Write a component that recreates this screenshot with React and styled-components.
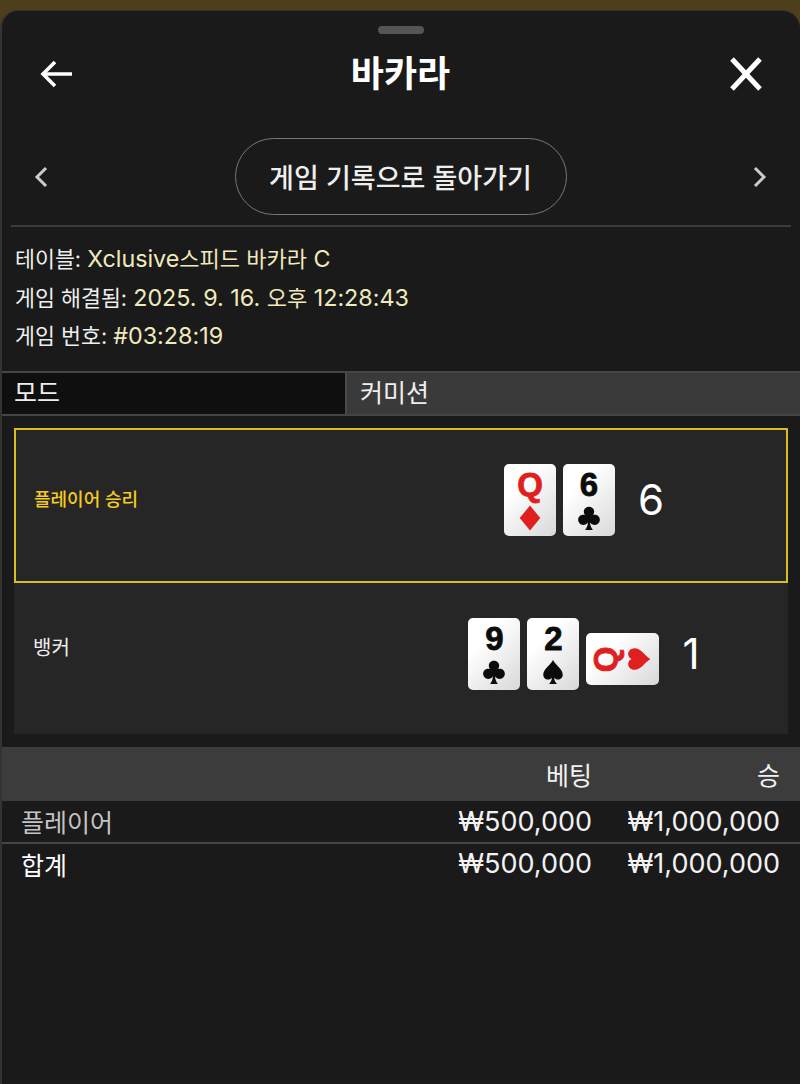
import React from 'react';
import styled, { createGlobalStyle } from 'styled-components';

const GlobalStyle = createGlobalStyle`
  html, body {
    margin: 0;
    height: 100%;
    background: #4d3f1b;
  }
  body {
    font-family: Inter, "Noto Sans CJK KR", "Noto Sans", sans-serif;
    color: #fff;
  }
  * { box-sizing: border-box; }
`;

const suitPaths = {
  diamond: 'M12 0.5 L21.5 12 L12 23.5 L2.5 12 Z',
  heart: 'M12 22.5 C9 17.5 2 14 2 7.8 C2 4.3 4.6 2 7.4 2 C9.4 2 11.2 3.2 12 5.2 C12.8 3.2 14.6 2 16.6 2 C19.4 2 22 4.3 22 7.8 C22 14 15 17.5 12 22.5 Z',
  spade: 'M12 1 C9.5 6 3 9.5 3 14.6 C3 17.4 5.1 19 7.3 19 C8.9 19 10.2 18.3 11 17 C10.9 19.4 10 21.4 8.4 23 L15.6 23 C14 21.4 13.1 19.4 13 17 C13.8 18.3 15.1 19 16.7 19 C18.9 19 21 17.4 21 14.6 C21 9.5 14.5 6 12 1 Z',
  club: 'M12 1.5 C9.2 1.5 7.2 3.6 7.2 6.2 C7.2 7.4 7.6 8.4 8.3 9.3 C7.8 9.1 7.2 9 6.6 9 C3.9 9 2 11.1 2 13.7 C2 16.3 4 18.4 6.6 18.4 C8.5 18.4 10 17.5 11 15.9 C10.9 18.8 10 21.2 8.4 23 L15.6 23 C14 21.2 13.1 18.8 13 15.9 C14 17.5 15.5 18.4 17.4 18.4 C20 18.4 22 16.3 22 13.7 C22 11.1 20.1 9 17.4 9 C16.8 9 16.2 9.1 15.7 9.3 C16.4 8.4 16.8 7.4 16.8 6.2 C16.8 3.6 14.8 1.5 12 1.5 Z',
};

const RED = '#e02020';
const BLACK = '#0c0c0c';

function Suit({ name, sideways }) {
  return (
    <SuitIcon viewBox="0 0 24 24" $sideways={sideways}>
      <path d={suitPaths[name]} fill={name === 'diamond' || name === 'heart' ? RED : BLACK} />
    </SuitIcon>
  );
}

function PlayingCard({ rank, suit, sideways }) {
  const isRed = suit === 'diamond' || suit === 'heart';
  return (
    <Card $sideways={sideways}>
      <Rank $red={isRed} $sideways={sideways}>{rank}</Rank>
      <Suit name={suit} sideways={sideways} />
    </Card>
  );
}

function App() {
  return (
    <>
      <GlobalStyle />
      <Sheet>
        <Handle />
        <Header>
          <IconButton>
            <svg width="32" height="28" viewBox="0 0 32 28" fill="none" stroke="#fff" strokeWidth="3.6">
              <path d="M32 14 H4" />
              <path d="M15 2 L3 14 L15 26" />
            </svg>
          </IconButton>
          <Title>바카라</Title>
          <IconButton>
            <svg width="34" height="34" viewBox="0 0 34 34" fill="none" stroke="#fff" strokeWidth="5">
              <path d="M3 2 L31 32" />
              <path d="M31 2 L3 32" />
            </svg>
          </IconButton>
        </Header>
        <NavRow>
          <Chevron>
            <svg width="14" height="22" viewBox="0 0 14 22" fill="none" stroke="#ccc" strokeWidth="3">
              <path d="M12 2 L3 11 L12 20" />
            </svg>
          </Chevron>
          <BackButton>게임 기록으로 돌아가기</BackButton>
          <Chevron>
            <svg width="14" height="22" viewBox="0 0 14 22" fill="none" stroke="#ccc" strokeWidth="3">
              <path d="M2 2 L11 11 L2 20" />
            </svg>
          </Chevron>
        </NavRow>
        <Info>
          <InfoLine>테이블: <InfoValue>Xclusive<Hangul>스피드 바카라</Hangul> C</InfoValue></InfoLine>
          <InfoLine>게임 해결됨: <InfoValue>2025. 9. 16. <Hangul>오후</Hangul> 12:28:43</InfoValue></InfoLine>
          <InfoLine>게임 번호: <InfoValue>#03:28:19</InfoValue></InfoLine>
        </Info>
        <Tabs>
          <Tab $active>모드</Tab>
          <Tab>커미션</Tab>
        </Tabs>
        <Results>
          <ResultPanel $winner>
            <ResultLabel $winner>플레이어 승리</ResultLabel>
            <Hand $winner>
              <PlayingCard rank="Q" suit="diamond" />
              <PlayingCard rank="6" suit="club" />
              <Score>6</Score>
            </Hand>
          </ResultPanel>
          <ResultPanel>
            <ResultLabel>뱅커</ResultLabel>
            <Hand>
              <PlayingCard rank="9" suit="club" />
              <PlayingCard rank="2" suit="spade" />
              <PlayingCard rank="Q" suit="heart" sideways />
              <Score>1</Score>
            </Hand>
          </ResultPanel>
        </Results>
        <TableHead>
          <span />
          <Amount>베팅</Amount>
          <Amount>승</Amount>
        </TableHead>
        <TableRow $divided>
          <RowLabel $muted>플레이어</RowLabel>
          <Amount $money>₩500,000</Amount>
          <Amount $money>₩1,000,000</Amount>
        </TableRow>
        <TableRow>
          <RowLabel>합계</RowLabel>
          <Amount $money>₩500,000</Amount>
          <Amount $money>₩1,000,000</Amount>
        </TableRow>
      </Sheet>
    </>
  );
}

export default App;

const Sheet = styled.div`
  margin-top: 10px;
  height: 1074px;
  overflow: hidden;
  background: #1a1a1a;
  border: 2px solid #333;
  border-width: 1px 0 0 2px;
  border-radius: 18px 18px 0 0;
`;

const Handle = styled.div`
  width: 46px;
  height: 8px;
  margin: 15px auto 0;
  border-radius: 4px;
  background: #555;
`;

const Header = styled.div`
  height: 80px;
  padding: 0 37px 0 38px;
  display: flex;
  align-items: center;
  justify-content: space-between;
`;

const IconButton = styled.div`
  display: flex;
  align-items: center;
  justify-content: center;
`;

const Title = styled.div`
  font-size: 36px;
  font-weight: 700;
  line-height: 1;
`;

const NavRow = styled.div`
  height: 77px;
  margin: 24px 9px 0;
  padding: 0 24px 0 23px;
  display: flex;
  align-items: center;
  justify-content: space-between;
`;

const Chevron = styled.div`
  display: flex;
  align-items: center;
`;

const BackButton = styled.div`
  width: 332px;
  height: 77px;
  border: 1.5px solid #777;
  border-radius: 39px;
  display: flex;
  align-items: center;
  justify-content: center;
  font-size: 27px;
  font-weight: 500;
  color: #eee;
`;

const Info = styled.div`
  margin: 10px 9px 0;
  padding: 13px 4px 15px;
  border-top: 2px solid #3c3c3c;
`;

const InfoLine = styled.div`
  height: 38.5px;
  font-size: 21.7px;
  line-height: 38px;
  color: #eee;
`;

const InfoValue = styled.span`
  font-size: 23.3px;
  color: #efe9bd;
`;

const Hangul = styled.span`
  font-size: 22px;
`;

const Tabs = styled.div`
  height: 45px;
  display: flex;
  border-top: 2px solid #454545;
  border-bottom: 2px solid #454545;
`;

const Tab = styled.div`
  flex: ${(p) => (p.$active ? '0 0 343px' : '1')};
  padding-left: ${(p) => (p.$active ? '12px' : '13px')};
  background: ${(p) => (p.$active ? '#0f0f0f' : '#3a3a3a')};
  border-left: ${(p) => (p.$active ? 'none' : '2px solid #4a4a4a')};
  font-size: 25px;
  line-height: 41px;
  color: #eee;
`;

const Results = styled.div`
  margin: 12px 12px 13px;
`;

const ResultPanel = styled.div`
  height: ${(p) => (p.$winner ? '155px' : '151px')};
  display: grid;
  grid-template-columns: 366px 1fr;
  align-items: center;
  background: #262626;
  border: ${(p) => (p.$winner ? '2px solid #d9bd27' : 'none')};
`;

const ResultLabel = styled.div`
  padding: 0 0 ${(p) => (p.$winner ? '15px' : '23px')} ${(p) => (p.$winner ? '18px' : '19px')};
  font-size: ${(p) => (p.$winner ? '18px' : '20px')};
  font-weight: ${(p) => (p.$winner ? 500 : 400)};
  color: ${(p) => (p.$winner ? '#f5cc1f' : '#eee')};
`;

const Hand = styled.div`
  padding-bottom: ${(p) => (p.$winner ? '11px' : '8px')};
  display: flex;
  align-items: center;
  justify-content: center;
  gap: 7px;
`;

const Card = styled.div`
  width: ${(p) => (p.$sideways ? '73px' : '52px')};
  height: ${(p) => (p.$sideways ? '52px' : '72px')};
  margin-top: ${(p) => (p.$sideways ? '10px' : '0')};
  padding: ${(p) => (p.$sideways ? '0 7px' : '4px 0 5px')};
  border-radius: 5px;
  background: linear-gradient(135deg, #fff 30%, #d8d8d8 100%);
  display: flex;
  flex-direction: ${(p) => (p.$sideways ? 'row' : 'column')};
  align-items: center;
  justify-content: space-between;
`;

const Rank = styled.span`
  font-family: "Liberation Sans", sans-serif;
  font-size: 33px;
  font-weight: 700;
  line-height: 33px;
  -webkit-text-stroke: 0.8px currentColor;
  color: ${(p) => (p.$red ? '#e02020' : '#0c0c0c')};
  transform: ${(p) => (p.$sideways ? 'rotate(-90deg)' : 'none')};
`;

const SuitIcon = styled.svg`
  width: 26px;
  height: 26px;
  flex: none;
  transform: ${(p) => (p.$sideways ? 'rotate(-90deg)' : 'none')};
`;

const Score = styled.div`
  margin-left: 16px;
  font-size: 42px;
  line-height: 1;
  color: #fff;
`;

const rowColumns = `
  display: grid;
  grid-template-columns: 1fr 188px 188px;
  align-items: center;
  padding: 0 20px 0 19px;
`;

const TableHead = styled.div`
  ${rowColumns}
  height: 54px;
  background: #3c3c3c;
  font-size: 25px;
`;

const TableRow = styled.div`
  ${rowColumns}
  height: ${(p) => (p.$divided ? '43px' : '40px')};
  font-size: 25px;
  border-bottom: ${(p) => (p.$divided ? '2px solid #454545' : 'none')};
`;

const RowLabel = styled.div`
  color: ${(p) => (p.$muted ? '#c4c4c4' : '#fff')};
`;

const Amount = styled.div`
  text-align: right;
  font-size: ${(p) => (p.$money ? '27px' : 'inherit')};
  color: #f2f2f2;
`;
